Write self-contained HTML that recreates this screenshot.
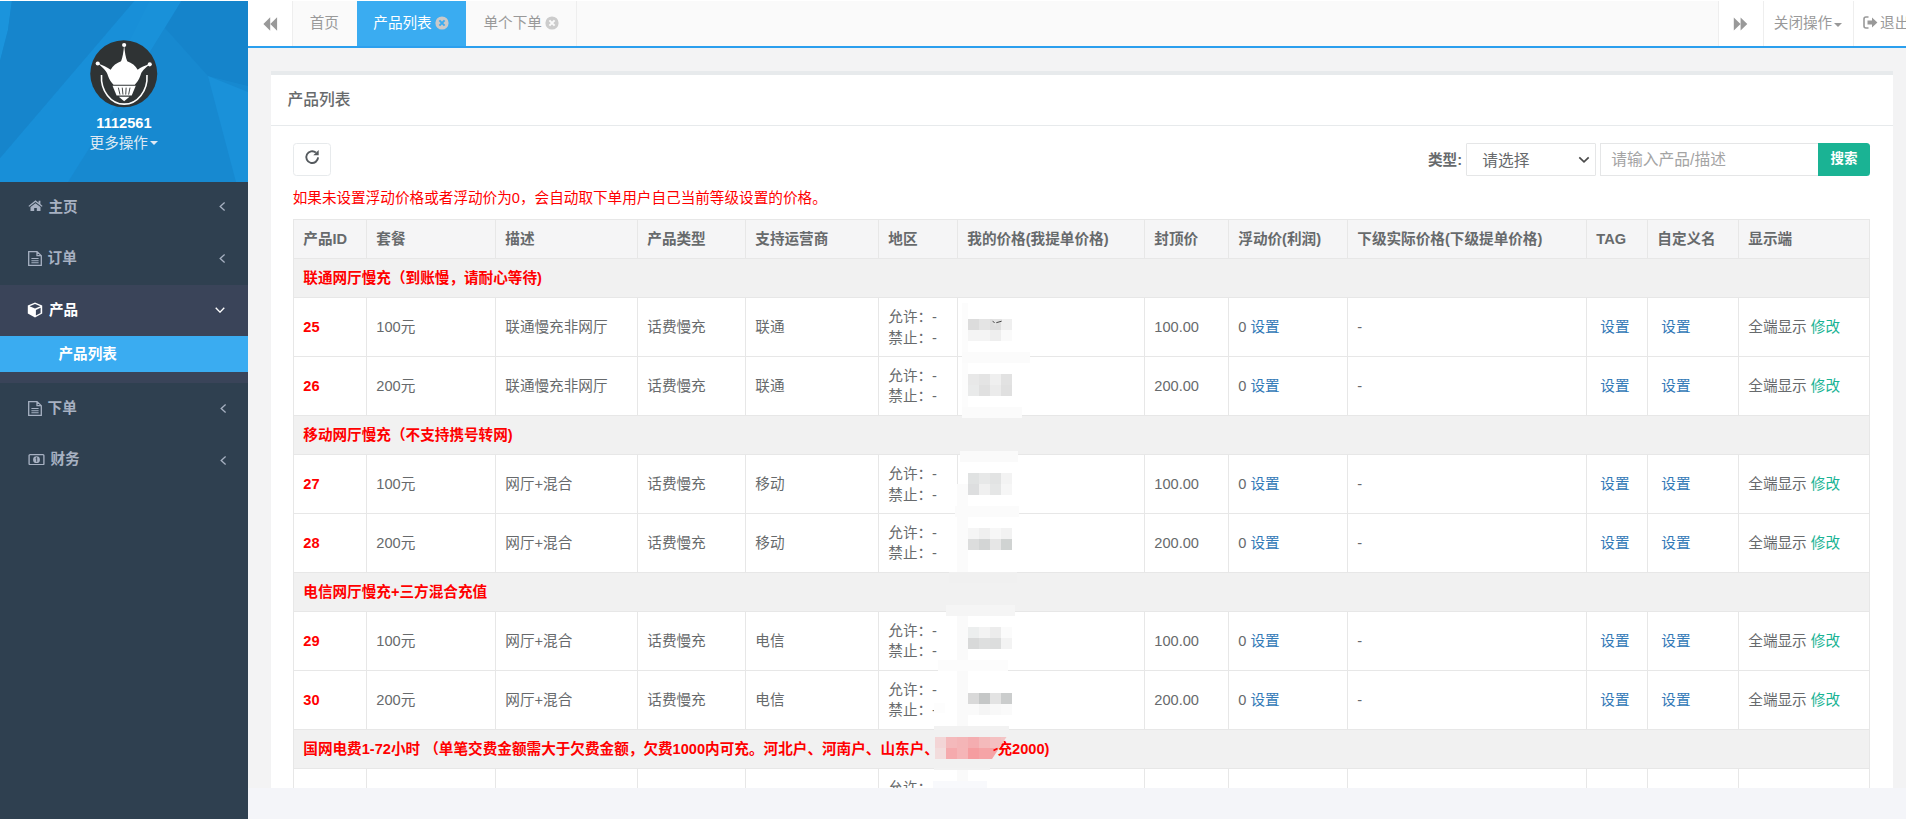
<!DOCTYPE html>
<html lang="zh-CN">
<head>
<meta charset="utf-8">
<title>产品列表</title>
<style>
*{box-sizing:border-box;}
html,body{margin:0;padding:0;}
body{width:1906px;height:819px;overflow:hidden;position:relative;background:#f3f3f4;
  font-family:"Liberation Sans","Noto Sans CJK SC",sans-serif;font-size:14.625px;color:#676a6c;line-height:20.9px;}
a{text-decoration:none;}
/* ---------- sidebar ---------- */
#side{position:absolute;left:0;top:0;width:248px;height:819px;background:#2f4050;overflow:hidden;}
#hdr{position:absolute;left:0;top:0;width:248px;height:182px;background:#1789d0;overflow:hidden;}
#hdr svg.bg{position:absolute;left:0;top:0;}
#avatar{position:absolute;left:90.25px;top:40.25px;width:67.5px;height:67.5px;}
#uname{position:absolute;left:0;width:248px;top:113.2px;text-align:center;color:#fff;font-weight:bold;font-size:14.625px;line-height:21px;}
#umore{position:absolute;left:0;width:248px;top:132.8px;text-align:center;color:#dfe9f3;font-size:14.625px;line-height:21px;}
#umore i{display:inline-block;width:0;height:0;border-left:4.4px solid transparent;border-right:4.4px solid transparent;border-top:4.4px solid #dfe9f3;vertical-align:middle;margin-left:2.5px;margin-top:-1px;}
.mi{position:absolute;left:0;width:248px;height:51.6px;color:#a7b1c2;font-weight:bold;}
.mi .tx{position:absolute;left:48.5px;top:14.6px;line-height:21px;font-size:14.625px;}
.mi svg.ic{position:absolute;}
.mi svg.ar{position:absolute;}
#act{position:absolute;left:0;top:285px;width:248px;height:98px;background:#3a4459;}
#sub{position:absolute;left:0;top:336px;width:248px;height:36px;background:#3aacf1;color:#fff;font-weight:bold;}
#sub span{position:absolute;left:58.5px;top:8.2px;line-height:21px;}
/* ---------- top tabs ---------- */
#top{position:absolute;left:248px;top:0;width:1658px;height:48px;background:#fafafa;border-bottom:2px solid #2b9fee;border-top:1px solid #fff;}
#top .b{position:absolute;top:0;height:45px;}
#top .t{position:absolute;top:0;height:45px;line-height:44.6px;font-size:14.625px;color:#999;white-space:nowrap;}
/* ---------- panel ---------- */
#panel{position:absolute;left:271px;top:71px;width:1622px;height:760px;background:#fff;border-top:4px solid #e7eaec;}
#ptitle{position:absolute;left:0;top:0;width:1622px;height:51px;border-bottom:1px solid #e7eaec;}
#ptitle h5{margin:0;position:absolute;left:16.5px;top:13.5px;font-size:15.75px;font-weight:500;line-height:22px;color:#676a6c;}
#foot{position:absolute;left:248px;top:788px;width:1658px;height:31px;background:#f4f5f9;}
#rbtn{position:absolute;left:22px;top:68px;width:38px;height:33px;border:1px solid #e7eaec;border-radius:3.5px;background:#fff;}
#tip{position:absolute;left:21.7px;top:113.1px;color:#ff0000;font-size:14.625px;line-height:21px;white-space:nowrap;}
#lbl{position:absolute;left:1157px;top:74.5px;font-weight:bold;line-height:21px;}
#sel{position:absolute;left:1195px;top:68px;width:130px;height:33px;border:1px solid #e5e6e7;border-radius:1px;background:#fff;}
#sel span{position:absolute;left:15.3px;top:5.5px;font-size:15.75px;line-height:21px;}
#inp{position:absolute;left:1329px;top:68px;width:218px;height:33px;border:1px solid #e5e6e7;border-right:none;background:#fff;}
#inp span{position:absolute;left:10.3px;top:5px;font-size:15.75px;line-height:21px;color:#a4a4a4;}
#sbtn{position:absolute;left:1547px;top:68px;width:52px;height:33px;background:#1ab394;border-radius:0 3.5px 3.5px 0;color:#fff;font-weight:bold;font-size:13.5px;text-align:center;line-height:31px;}
/* ---------- table ---------- */
table{position:absolute;left:22px;top:144px;width:1576px;border-collapse:collapse;table-layout:fixed;font-size:14.625px;}
th,td{border:1px solid #e7e7e7;padding:1px 9px 0 9.3px;text-align:left;vertical-align:middle;line-height:20.4px;white-space:nowrap;overflow:hidden;}
thead th{background:#f5f5f6;height:39px;font-weight:bold;}
tr.g td{background:#f1f1f1;height:39.3px;color:#ff0000;font-weight:bold;}
tr.r td{height:58.8px;}
td.id{color:#ff0000;font-weight:bold;}
a.l{color:#337ab7;}
a.m{color:#1ab394;}
#ov{position:absolute;left:0;top:0;width:0;height:0;}
#ov i{position:absolute;display:block;}
</style>
</head>
<body>
<div id="side">
  <div id="hdr">
    <svg class="bg" width="248" height="182" viewBox="0 0 248 182">
      <polygon points="135,0 182,0 68,182 0,182 0,158" fill="#188fd8"/>
      <polygon points="150,0 182,0 120,100 100,100" fill="#1a92db" opacity=".6"/>
      <polygon points="0,0 12,0 8,30 0,61" fill="#1b94dc"/>
      <polygon points="182,0 248,0 248,86 208,76 165,28" fill="#1584cb"/>
      <polygon points="208,76 248,92 248,182 236,182" fill="#1a91d9"/>
      <polygon points="12,0 135,0 0,158 0,61 8,30" fill="#1685cc"/>
    </svg>
    <svg id="avatar" viewBox="0 0 68 68">
      <circle cx="34" cy="34" r="33.75" fill="#2f3334"/>
      <g fill="#fff">
        <circle cx="34.4" cy="5" r="2.1"/><circle cx="7.8" cy="23.7" r="2.1"/><circle cx="60.2" cy="24.5" r="2.1"/>
        <path d="M34.4 5 C35 12 36 18 37.5 21.5 C42 23 46 26 48 30 C51 27.5 55.5 25.5 60.2 24.5 C55 28.5 51.5 32 50.7 36 C49.5 40 47 43 45.1 45 L23.7 45 C21.8 43 19.3 40 18.1 36 C17.3 32 13.5 28 7.8 23.7 C12.5 25 17.5 27.5 20.8 30 C22.8 26 27 23 31.3 21.5 C32.8 18 33.8 12 34.4 5 Z"/>
        <path d="M22.7 46.2 L46.1 46.2 L42 56 L26.8 56 Z"/>
        <path d="M29 57.2 L39.8 57.2 L34.4 61.8 Z"/>
      </g>
      <g stroke="#2f3334" stroke-width="0.9" fill="none"><path d="M28.6 48 L30.2 55 M32.5 48 L33.2 55 M36.4 48 L36 55 M40.3 48 L38.9 55"/></g>
      <path d="M11.6 35.2 C10.5 51 21 64.6 34.4 64.6 C47.8 64.6 58.5 51 57.4 35.2" fill="none" stroke="#fff" stroke-width="1.6"/>
    </svg>
    <div id="uname">1112561</div>
    <div id="umore">更多操作<i></i></div>
  </div>

  <div class="mi" style="top:182px">
    <svg class="ic" style="left:27.7px;top:18.4px" width="15" height="11.4" viewBox="0 0 15 12" preserveAspectRatio="none"><path d="M7.5 0.3 L0.4 6.2 L1.3 7.2 L7.5 2.2 L13.7 7.2 L14.6 6.2 L12.4 4.3 L12.4 0.9 L10.6 0.9 L10.6 2.8 Z M7.5 3.4 L2.5 7.5 L2.5 11.7 L6.2 11.7 L6.2 8.4 L8.8 8.4 L8.8 11.7 L12.5 11.7 L12.5 7.5 Z" fill="#a7b1c2"/></svg>
    <span class="tx">主页</span>
    <svg class="ar" style="left:219.2px;top:20.2px" width="7" height="9" viewBox="0 0 7 9"><path d="M5.6 0.6 L1.2 4.5 L5.6 8.4" fill="none" stroke="#a7b1c2" stroke-width="1.3"/></svg>
  </div>
  <div class="mi" style="top:233.6px">
    <svg class="ic" style="left:27.5px;top:17.3px" width="14" height="15" viewBox="0 0 14 16" preserveAspectRatio="none"><path d="M0.7 0.7 L9 0.7 L13.3 5 L13.3 15.3 L0.7 15.3 Z M9 0.7 L9 5 L13.3 5" fill="none" stroke="#a7b1c2" stroke-width="1.3"/><path d="M3.4 8 H10.6 M3.4 10.3 H10.6 M3.4 12.6 H10.6" stroke="#a7b1c2" stroke-width="1.1"/></svg>
    <span class="tx" style="left:47.6px">订单</span>
    <svg class="ar" style="left:219.2px;top:20.2px" width="7" height="9" viewBox="0 0 7 9"><path d="M5.6 0.6 L1.2 4.5 L5.6 8.4" fill="none" stroke="#a7b1c2" stroke-width="1.3"/></svg>
  </div>
  <div id="act"></div>
  <div class="mi" style="top:285px;color:#fff">
    <svg class="ic" style="left:26.9px;top:17.3px" width="16" height="16" viewBox="0 0 16 16"><path d="M8 0.4 L15.2 3.6 L15.2 11.6 L8 15.6 L0.8 11.6 L0.8 3.6 Z" fill="#fff"/><path d="M2.6 4.2 L8 6.6 L13.4 4.2 L8 2 Z" fill="#3a4459"/><path d="M8.9 8 L13.6 5.8 L13.6 10.9 L8.9 13.5 Z" fill="#3a4459"/></svg>
    <span class="tx" style="left:49px">产品</span>
    <svg class="ar" style="left:215.4px;top:22.1px" width="10" height="6.4" viewBox="0 0 11 7"><path d="M0.8 0.8 L5.5 5.6 L10.2 0.8" fill="none" stroke="#fff" stroke-width="1.5"/></svg>
  </div>
  <div id="sub"><span>产品列表</span></div>
  <div class="mi" style="top:383px">
    <svg class="ic" style="left:27.5px;top:18.3px" width="14" height="15" viewBox="0 0 14 16" preserveAspectRatio="none"><path d="M0.7 0.7 L9 0.7 L13.3 5 L13.3 15.3 L0.7 15.3 Z M9 0.7 L9 5 L13.3 5" fill="none" stroke="#a7b1c2" stroke-width="1.3"/><path d="M3.4 8 H10.6 M3.4 10.3 H10.6 M3.4 12.6 H10.6" stroke="#a7b1c2" stroke-width="1.1"/></svg>
    <span class="tx" style="left:47.6px">下单</span>
    <svg class="ar" style="left:219.6px;top:21px" width="7" height="9" viewBox="0 0 7 9"><path d="M5.6 0.6 L1.2 4.5 L5.6 8.4" fill="none" stroke="#a7b1c2" stroke-width="1.3"/></svg>
  </div>
  <div class="mi" style="top:434.6px">
    <svg class="ic" style="left:27.7px;top:19.5px" width="17" height="11.4" viewBox="0 0 17 12"><rect x="0.7" y="0.7" width="15.6" height="10.6" rx="1" fill="none" stroke="#a7b1c2" stroke-width="1.4"/><circle cx="8.5" cy="6" r="3.6" fill="#a7b1c2"/><path d="M8.7 3.8 V8.2 M7.6 4.8 L8.7 3.8" stroke="#2f4050" stroke-width="1" fill="none"/></svg>
    <span class="tx" style="left:50.4px">财务</span>
    <svg class="ar" style="left:219.6px;top:21px" width="7" height="9" viewBox="0 0 7 9"><path d="M5.6 0.6 L1.2 4.5 L5.6 8.4" fill="none" stroke="#a7b1c2" stroke-width="1.3"/></svg>
  </div>
</div>

<div id="top">
  <div class="b" style="left:0;width:45px;background:#fff;border-right:1px solid #eee">
    <svg style="position:absolute;left:14.5px;top:15.8px" width="15" height="14" viewBox="0 0 15 14"><path d="M7.2 0.3 L0.4 7 L7.2 13.7 Z M14.1 0.3 L7.3 7 L14.1 13.7 Z" fill="#999"/></svg>
  </div>
  <div class="t" style="left:45px;width:64px;padding-left:16.7px">首页</div>
  <div class="t" style="left:109px;width:109px;padding-left:16.3px;background:#3aacf1;color:#fff">产品列表</div>
  <svg style="position:absolute;left:187.2px;top:14.9px" width="14" height="14" viewBox="0 0 14 14"><circle cx="7" cy="7" r="6.6" fill="#c9c9c9"/><path d="M4.4 4.4 L9.6 9.6 M9.6 4.4 L4.4 9.6" stroke="#3aacf1" stroke-width="2"/></svg>
  <div class="t" style="left:218px;width:110.5px;padding-left:17.5px;border-right:1px solid #eee">单个下单</div>
  <svg style="position:absolute;left:297.2px;top:14.9px" width="14" height="14" viewBox="0 0 14 14"><circle cx="7" cy="7" r="6.6" fill="#ccc"/><path d="M4.4 4.4 L9.6 9.6 M9.6 4.4 L4.4 9.6" stroke="#fafafa" stroke-width="2"/></svg>

  <div class="b" style="left:1469.5px;width:45px;background:#fff;border-left:1px solid #eee">
    <svg style="position:absolute;left:14px;top:15.5px" width="15" height="14" viewBox="0 0 15 14"><path d="M0.8 0.5 L7.5 7 L0.8 13.5 Z M7.6 0.5 L14.3 7 L7.6 13.5 Z" fill="#999"/></svg>
  </div>
  <div class="t" style="left:1514.5px;width:90px;padding-left:10.3px;background:#fff;border-left:1px solid #eee">关闭操作<i style="display:inline-block;width:0;height:0;border-left:4.6px solid transparent;border-right:4.6px solid transparent;border-top:4.6px solid #999;vertical-align:middle;margin-left:1.6px;margin-top:2px"></i></div>
  <div class="t" style="left:1604.5px;width:60px;padding-left:26.6px;background:#fff;border-left:1px solid #eee">退出
    <svg style="position:absolute;left:9px;top:15px" width="15" height="13" viewBox="0 0 15 13"><path d="M5.5 1 H3 Q1 1 1 3 V10 Q1 12 3 12 H5.5" fill="none" stroke="#999" stroke-width="1.6"/><path d="M4.5 4.6 H9 V1.6 L14.4 6.5 L9 11.4 V8.4 H4.5 Z" fill="#999"/></svg>
  </div>
</div>

<div id="panel">
  <div id="ptitle"><h5>产品列表</h5></div>
  <div id="rbtn">
    <svg style="position:absolute;left:10.4px;top:5px" width="16" height="16" viewBox="0 0 16 16"><path d="M14.1 8.4 A5.9 5.9 0 1 1 11.9 3.5" fill="none" stroke="#555a5e" stroke-width="1.9"/><path d="M14.7 0.9 L14.7 6.3 L9.3 6.3 Z" fill="#555a5e"/></svg>
  </div>
  <div id="tip">如果未设置浮动价格或者浮动价为0，会自动取下单用户自己当前等级设置的价格。</div>
  <div id="lbl">类型:</div>
  <div id="sel"><span>请选择</span>
    <svg style="position:absolute;left:110.5px;top:11.5px" width="12" height="8" viewBox="0 0 12 8"><path d="M1.3 1.3 L6 5.8 L10.7 1.3" fill="none" stroke="#4a4a4a" stroke-width="1.7"/></svg>
  </div>
  <div id="inp"><span>请输入产品/描述</span></div>
  <div id="sbtn">搜索</div>

  <table>
    <colgroup>
      <col style="width:73px"><col style="width:129px"><col style="width:142px"><col style="width:108px"><col style="width:133px"><col style="width:79px"><col style="width:187px"><col style="width:84px"><col style="width:119px"><col style="width:239px"><col style="width:61px"><col style="width:91px"><col style="width:131px">
    </colgroup>
    <thead><tr><th>产品ID</th><th>套餐</th><th>描述</th><th>产品类型</th><th>支持运营商</th><th>地区</th><th>我的价格(我提单价格)</th><th>封顶价</th><th>浮动价(利润)</th><th>下级实际价格(下级提单价格)</th><th>TAG</th><th>自定义名</th><th>显示端</th></tr></thead>
    <tbody>
      <tr class="g"><td colspan="13">联通网厅慢充（到账慢，请耐心等待)</td></tr>
      <tr class="r"><td class="id">25</td><td>100元</td><td>联通慢充非网厅</td><td>话费慢充</td><td>联通</td><td>允许：-<br>禁止：-</td><td></td><td>100.00</td><td>0 <a class="l">设置</a></td><td>-</td><td>&nbsp;<a class="l">设置</a></td><td>&nbsp;<a class="l">设置</a></td><td>全端显示 <a class="m">修改</a></td></tr>
      <tr class="r"><td class="id">26</td><td>200元</td><td>联通慢充非网厅</td><td>话费慢充</td><td>联通</td><td>允许：-<br>禁止：-</td><td></td><td>200.00</td><td>0 <a class="l">设置</a></td><td>-</td><td>&nbsp;<a class="l">设置</a></td><td>&nbsp;<a class="l">设置</a></td><td>全端显示 <a class="m">修改</a></td></tr>
      <tr class="g"><td colspan="13">移动网厅慢充（不支持携号转网)</td></tr>
      <tr class="r"><td class="id">27</td><td>100元</td><td>网厅+混合</td><td>话费慢充</td><td>移动</td><td>允许：-<br>禁止：-</td><td></td><td>100.00</td><td>0 <a class="l">设置</a></td><td>-</td><td>&nbsp;<a class="l">设置</a></td><td>&nbsp;<a class="l">设置</a></td><td>全端显示 <a class="m">修改</a></td></tr>
      <tr class="r"><td class="id">28</td><td>200元</td><td>网厅+混合</td><td>话费慢充</td><td>移动</td><td>允许：-<br>禁止：-</td><td></td><td>200.00</td><td>0 <a class="l">设置</a></td><td>-</td><td>&nbsp;<a class="l">设置</a></td><td>&nbsp;<a class="l">设置</a></td><td>全端显示 <a class="m">修改</a></td></tr>
      <tr class="g"><td colspan="13">电信网厅慢充+三方混合充值</td></tr>
      <tr class="r"><td class="id">29</td><td>100元</td><td>网厅+混合</td><td>话费慢充</td><td>电信</td><td>允许：-<br>禁止：-</td><td></td><td>100.00</td><td>0 <a class="l">设置</a></td><td>-</td><td>&nbsp;<a class="l">设置</a></td><td>&nbsp;<a class="l">设置</a></td><td>全端显示 <a class="m">修改</a></td></tr>
      <tr class="r"><td class="id">30</td><td>200元</td><td>网厅+混合</td><td>话费慢充</td><td>电信</td><td>允许：-<br>禁止：-</td><td></td><td>200.00</td><td>0 <a class="l">设置</a></td><td>-</td><td>&nbsp;<a class="l">设置</a></td><td>&nbsp;<a class="l">设置</a></td><td>全端显示 <a class="m">修改</a></td></tr>
      <tr class="g"><td colspan="13">国网电费1-72小时 （单笔交费金额需大于欠费金额，欠费1000内可充。河北户、河南户、山东户、<span id="gap" style="display:inline-block;width:58.6px"></span>充2000)</td></tr>
      <tr class="r"><td class="id">31</td><td>100元</td><td>电费</td><td>电费</td><td>国网</td><td>允许：-<br>禁止：-</td><td></td><td>100.00</td><td>0 <a class="l">设置</a></td><td>-</td><td>&nbsp;<a class="l">设置</a></td><td>&nbsp;<a class="l">设置</a></td><td>全端显示 <a class="m">修改</a></td></tr>
    </tbody>
  </table>
</div>
<div id="ov">
<i style="left:962px;top:303px;width:6px;height:115px;background:#fcfcfc"></i>
<i style="left:962px;top:352px;width:68px;height:11px;background:#fbfbfb"></i>
<i style="left:962px;top:407px;width:60px;height:11px;background:#fbfbfb"></i>
<i style="left:960px;top:451px;width:58px;height:11px;background:#fafafa"></i>
<i style="left:957px;top:484px;width:11px;height:88px;background:#fbfbfb"></i>
<i style="left:955px;top:506px;width:64px;height:11px;background:#fbfbfb"></i>
<i style="left:949px;top:572px;width:68px;height:11px;background:#f0f0f0"></i>
<i style="left:946px;top:605px;width:69px;height:11px;background:#f5f5f5"></i>
<i style="left:957px;top:616px;width:11px;height:110px;background:#fafafa"></i>
<i style="left:938px;top:660px;width:70px;height:11px;background:#fcfcfc"></i>
<i style="left:934px;top:703px;width:11px;height:10px;background:#fdfdfd"></i>
<i style="left:934px;top:726px;width:75px;height:4px;background:#f2f2f2"></i>
<i style="left:934px;top:768px;width:56px;height:2px;background:#f2f2f2"></i>
<i style="left:957px;top:770px;width:11px;height:18px;background:#fafafa"></i>
<i style="left:933px;top:781px;width:54px;height:7px;background:#f8f9fc"></i>
<i style="left:968px;top:319px;width:11px;height:11px;background:#dcdcdc"></i>
<i style="left:979px;top:319px;width:11px;height:11px;background:#e4e4e4"></i>
<i style="left:990px;top:319px;width:11px;height:11px;background:#dedede"></i>
<i style="left:1001px;top:319px;width:11px;height:11px;background:#efefef"></i>
<i style="left:968px;top:330px;width:11px;height:11px;background:#f4f4f4"></i>
<i style="left:979px;top:330px;width:11px;height:11px;background:#f4f4f4"></i>
<i style="left:990px;top:330px;width:11px;height:11px;background:#eeeeee"></i>
<i style="left:1001px;top:330px;width:11px;height:11px;background:#fafafa"></i>
<i style="left:968px;top:374px;width:11px;height:11px;background:#e8e8e8"></i>
<i style="left:979px;top:374px;width:11px;height:11px;background:#e4e4e4"></i>
<i style="left:990px;top:374px;width:11px;height:11px;background:#efefef"></i>
<i style="left:1001px;top:374px;width:11px;height:11px;background:#e2e2e2"></i>
<i style="left:968px;top:385px;width:11px;height:11px;background:#e9eaea"></i>
<i style="left:979px;top:385px;width:11px;height:11px;background:#e0e0e0"></i>
<i style="left:990px;top:385px;width:11px;height:11px;background:#ebebeb"></i>
<i style="left:1001px;top:385px;width:11px;height:11px;background:#e0e0e0"></i>
<i style="left:968px;top:473px;width:11px;height:11px;background:#e0e2e2"></i>
<i style="left:979px;top:473px;width:11px;height:11px;background:#e7e8e8"></i>
<i style="left:990px;top:473px;width:11px;height:11px;background:#e2e3e3"></i>
<i style="left:1001px;top:473px;width:11px;height:11px;background:#f3f3f3"></i>
<i style="left:968px;top:484px;width:11px;height:11px;background:#dddedf"></i>
<i style="left:979px;top:484px;width:11px;height:11px;background:#f0f0f0"></i>
<i style="left:990px;top:484px;width:11px;height:11px;background:#e5e6e6"></i>
<i style="left:1001px;top:484px;width:11px;height:11px;background:#f6f6f6"></i>
<i style="left:968px;top:528px;width:11px;height:11px;background:#f5f5f5"></i>
<i style="left:979px;top:528px;width:11px;height:11px;background:#efefef"></i>
<i style="left:990px;top:528px;width:11px;height:11px;background:#f7f7f7"></i>
<i style="left:1001px;top:528px;width:11px;height:11px;background:#f2f2f2"></i>
<i style="left:968px;top:539px;width:11px;height:11px;background:#dcdddd"></i>
<i style="left:979px;top:539px;width:11px;height:11px;background:#d3d5d5"></i>
<i style="left:990px;top:539px;width:11px;height:11px;background:#e6e6e6"></i>
<i style="left:1001px;top:539px;width:11px;height:11px;background:#d0d3d2"></i>
<i style="left:968px;top:627px;width:11px;height:11px;background:#eceeee"></i>
<i style="left:979px;top:627px;width:11px;height:11px;background:#f3f3f3"></i>
<i style="left:990px;top:627px;width:11px;height:11px;background:#ececec"></i>
<i style="left:1001px;top:627px;width:11px;height:11px;background:#fbfbfb"></i>
<i style="left:968px;top:638px;width:11px;height:11px;background:#d8d9d9"></i>
<i style="left:979px;top:638px;width:11px;height:11px;background:#dedfdf"></i>
<i style="left:990px;top:638px;width:11px;height:11px;background:#dcdddd"></i>
<i style="left:1001px;top:638px;width:11px;height:11px;background:#f3f3f3"></i>
<i style="left:968px;top:693px;width:11px;height:11px;background:#d9d9d9"></i>
<i style="left:979px;top:693px;width:11px;height:11px;background:#c5c7c7"></i>
<i style="left:990px;top:693px;width:11px;height:11px;background:#e3e3e3"></i>
<i style="left:1001px;top:693px;width:11px;height:11px;background:#cbcdcd"></i>
<i style="left:968px;top:704px;width:11px;height:11px;background:#fafafa"></i>
<i style="left:979px;top:704px;width:11px;height:11px;background:#f5f5f5"></i>
<i style="left:990px;top:704px;width:11px;height:11px;background:#f8f8f8"></i>
<i style="left:1001px;top:704px;width:11px;height:11px;background:#fafafa"></i>
<svg style="position:absolute;left:991px;top:319px" width="12" height="9" viewBox="0 0 12 9"><path d="M1.5 3.2 L4 8 L6 4 L10.8 2.8 L10.8 0 L1.5 0 Z" fill="#e3e3e3"/><path d="M4.2 7.5 L6.2 3.6 L10.8 2.6 L10.8 8 Z" fill="#fbfbfb" opacity=".0"/><path d="M1.6 2.3 L3.6 3.6 M5.3 3.7 L10.6 2.2" stroke="#444" stroke-width="1" fill="none"/></svg>
<svg class="px" style="position:absolute;left:935px;top:737px" width="75" height="22" viewBox="0 0 75 22"><defs><clipPath id="pc"><polygon points="-2,0 71.5,0 57,22 -2,22"/></clipPath></defs><g clip-path="url(#pc)"><rect x="-2" y="0" width="13" height="11" fill="#f3d5d6"/><rect x="11" y="0" width="11" height="11" fill="#f4b9bb"/><rect x="22" y="0" width="11" height="11" fill="#f4b5b7"/><rect x="33" y="0" width="11" height="11" fill="#f4adb0"/><rect x="44" y="0" width="11" height="11" fill="#f4babb"/><rect x="55" y="0" width="11" height="11" fill="#f4c0c1"/><rect x="66" y="0" width="9" height="11" fill="#f3c4c5"/><rect x="-2" y="11" width="13" height="11" fill="#f2dcdc"/><rect x="11" y="11" width="11" height="11" fill="#f5aaad"/><rect x="22" y="11" width="11" height="11" fill="#f5b5b7"/><rect x="33" y="11" width="11" height="11" fill="#f59da0"/><rect x="44" y="11" width="11" height="11" fill="#f5a4a6"/><rect x="55" y="11" width="11" height="11" fill="#f5a4a6"/></g><path d="M58.5 13.5 L62.5 11.5" stroke="#ff0000" stroke-width="1.4"/></svg>
</div>
<div id="foot"></div>
<div style="position:absolute;left:0;top:0;width:1906px;height:1px;background:#fff"></div>
</body>
</html>
